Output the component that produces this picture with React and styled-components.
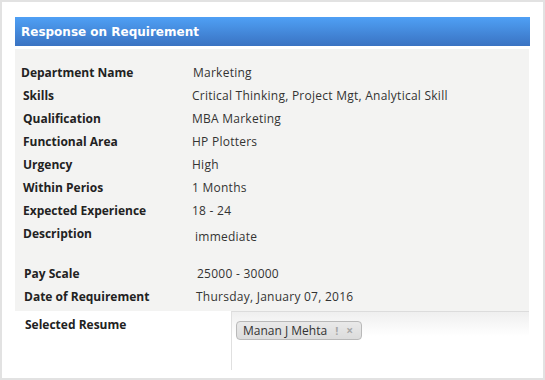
import React from 'react';
import styled, { createGlobalStyle } from 'styled-components';

const GlobalStyle = createGlobalStyle`
  html, body {
    margin: 0;
    padding: 0;
    background: #ffffff;
  }
`;

const Frame = styled.div`
  box-sizing: border-box;
  width: 545px;
  height: 380px;
  border: 2px solid #e2e2e2;
  background: #ffffff;
  padding: 15px 13px 0 13px;
  font-family: "Open Sans", "DejaVu Sans", sans-serif;
`;

const Header = styled.div`
  height: 29px;
  display: flex;
  align-items: center;
  padding-left: 6px;
  background: linear-gradient(#4fa0f5, #3a73c2);
  color: #ffffff;
  font-family: "DejaVu Sans", Verdana, sans-serif;
  font-weight: bold;
  font-size: 12px;
`;

const Panel = styled.div`
  margin-top: 3px;
  margin-right: 1px;
  background: #f3f3f2;
  padding: 12px 0 3px 6px;
`;

const Row = styled.div`
  display: grid;
  grid-template-columns: 171px 1fr;
  height: ${(p) => p.$height || 23}px;
`;

const Label = styled.div`
  padding-left: ${(p) => p.$shift || 0}px;
  line-height: 23px;
  font-size: 12px;
  font-weight: bold;
  color: #222222;
`;

const Value = styled.div`
  padding-left: ${(p) => p.$shift || 0}px;
  padding-top: ${(p) => p.$drop || 0}px;
  line-height: 23px;
  font-size: 12px;
  letter-spacing: 0.25px;
  color: #333333;
`;

const ResumeRow = styled.div`
  display: grid;
  grid-template-columns: 216px 1fr;
  margin-right: 1px;
`;

const ResumeLabel = styled.div`
  padding: 2px 0 0 10px;
  line-height: 23px;
  font-size: 12px;
  font-weight: bold;
  color: #222222;
`;

const ResumeBox = styled.div`
  height: 52px;
  border-top: 1px solid #dcdcdc;
  border-left: 1px solid #e0e0e0;
  background: linear-gradient(#efefef, #ffffff 24px);
  padding: 6px 0 0 4px;
`;

const Chip = styled.span`
  display: inline-flex;
  align-items: center;
  height: 19px;
  box-sizing: border-box;
  padding: 0 8px 0 6px;
  border: 1px solid #b9b9b9;
  border-radius: 4px;
  background: linear-gradient(#e9e9e9, #dcdcdc);
  font-size: 12px;
  color: #333333;
`;

const ChipMark = styled.span`
  margin-left: 8px;
  color: #a8a8a8;
  font-size: ${(p) => p.$size || 11}px;
  font-weight: bold;
`;

const rows = [
  { label: 'Department Name', value: 'Marketing', lx: 0, vx: 1 },
  { label: 'Skills', value: 'Critical Thinking, Project Mgt, Analytical Skill', lx: 2, vx: 0 },
  { label: 'Qualification', value: 'MBA Marketing', lx: 2, vx: 0 },
  { label: 'Functional Area', value: 'HP Plotters', lx: 2, vx: 0 },
  { label: 'Urgency', value: 'High', lx: 2, vx: 0 },
  { label: 'Within Perios', value: '1 Months', lx: 2, vx: 0 },
  { label: 'Expected Experience', value: '18 - 24', lx: 2, vx: 0 },
  { label: 'Description', value: 'immediate', lx: 2, vx: 3, drop: 3, height: 40 },
  { label: 'Pay Scale', value: '25000 - 30000', lx: 3, vx: 5 },
  { label: 'Date of Requirement', value: 'Thursday, January 07, 2016', lx: 3, vx: 4 },
];

const App = () => (
  <>
    <GlobalStyle />
    <Frame>
      <Header>Response on Requirement</Header>
      <Panel>
        {rows.map((r) => (
          <Row key={r.label} $height={r.height}>
            <Label $shift={r.lx}>{r.label}</Label>
            <Value $shift={r.vx} $drop={r.drop}>{r.value}</Value>
          </Row>
        ))}
      </Panel>
      <ResumeRow>
        <ResumeLabel>Selected Resume</ResumeLabel>
        <ResumeBox>
          <Chip>
            Manan J Mehta
            <ChipMark>!</ChipMark>
            <ChipMark $size={12}>×</ChipMark>
          </Chip>
        </ResumeBox>
      </ResumeRow>
    </Frame>
  </>
);

export default App;
